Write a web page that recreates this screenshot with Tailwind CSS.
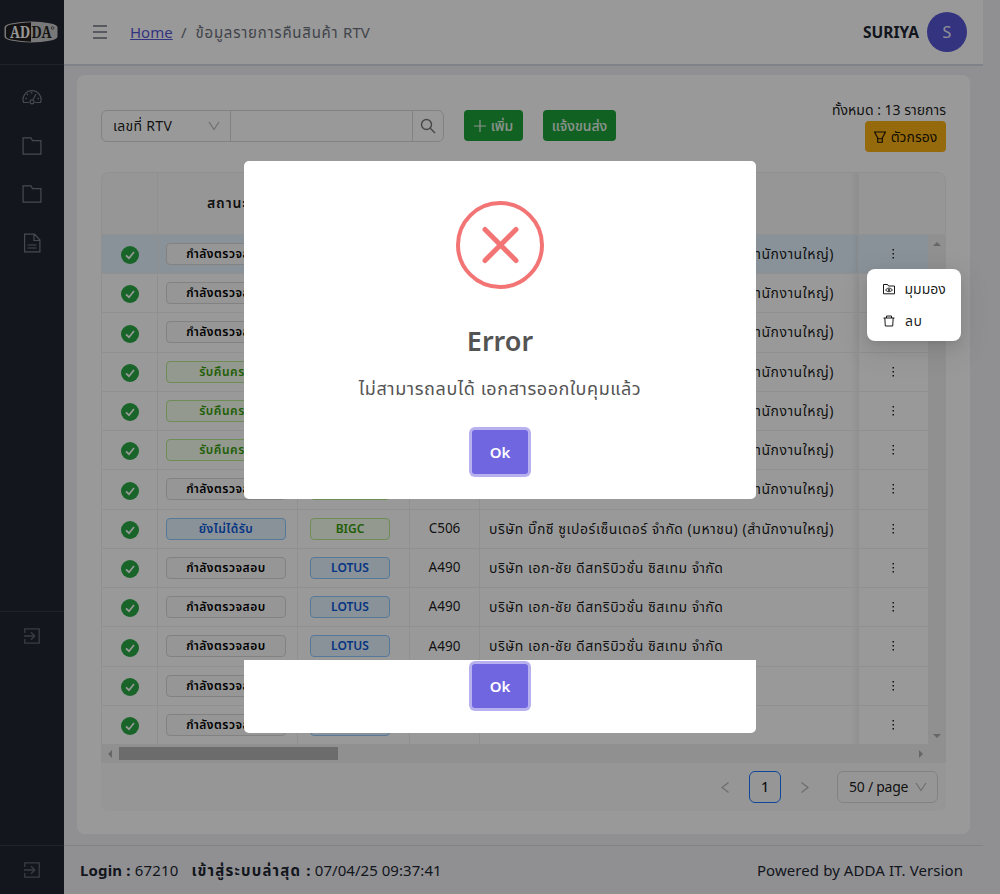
<!DOCTYPE html>
<html lang="th">
<head>
<meta charset="utf-8">
<title>ADDA RTV</title>
<script src="https://cdn.jsdelivr.net/npm/@tailwindcss/browser@4"></script>
</head>
<body class="relative h-[894px] w-[1000px] overflow-hidden bg-[#f0f1f6] font-['Noto_Sans','Noto_Sans_Thai','Open_Sans',sans-serif] text-sm text-[#212631]">
<div class="flex h-[894px]">
  <aside class="flex w-16 shrink-0 flex-col bg-[#212631] text-[#8c9099]">
    <div class="flex h-[65px] items-center justify-center border-b border-[#363b47] pr-0.5">
      <svg width="54" height="22" viewBox="0 0 54 22"><path d="M7 2.5Q27 -1.500 47 2.500Q53.500 4 53.500 6.500V15.500Q53.500 18 47 19.500Q27 23.500 7 19.500Q.5 18 .5 15.500V6.500Q.5 4 7 2.500Z" fill="#c8c8c8"/><path d="M7.500 3.500Q17 1.500 27 1.300V20.700Q17 20.500 7.500 18.500Q2 17.500 2 15V7Q2 4.500 7.500 3.500Z" fill="#231f20"/><text x="6" y="16.500" font-family="Noto Serif,Liberation Serif" font-weight="700" font-size="16" textLength="20" lengthAdjust="spacingAndGlyphs" fill="#fff">AD</text><text x="27.500" y="16.500" font-family="Noto Serif,Liberation Serif" font-weight="700" font-size="16" textLength="20" lengthAdjust="spacingAndGlyphs" fill="#231f20">DA</text><circle cx="48.500" cy="7" r="1.300" fill="none" stroke="#333" stroke-width=".7"/></svg>
    </div>
    <nav class="flex h-[546px] flex-col items-center gap-7 pt-[23px] opacity-80">
      <svg class="size-5" viewBox="0 0 20 20" fill="none" stroke="currentColor" stroke-width="1.200"><path d="M6.800 14.500H1.500A9 9 0 1 1 18.600 14.500H13.200M11 11.500L14 6"/><circle cx="10" cy="13.800" r="2"/><path d="M3.300 10.500h1.500M5 6l1 1M9.500 4v1.500M15.500 10.500H17" stroke-width="1.500"/></svg>
      <svg class="size-5 shrink-0" viewBox="0 0 20 20" fill="none" stroke="currentColor" stroke-width="1.200"><path d="M1.100 1.900H9L10.500 4.700H18.900V18.100H1.100Z"/></svg>
      <svg class="size-5 shrink-0" viewBox="0 0 20 20" fill="none" stroke="currentColor" stroke-width="1.200"><path d="M1.100 1.900H9L10.500 4.700H18.900V18.100H1.100Z"/></svg>
      <svg class="mt-px size-5 shrink-0" viewBox="0 0 20 20" fill="none" stroke="currentColor" stroke-width="1.200"><path d="M2.600 1.100H12.500L17.900 7V18.900H2.600ZM12 1.100V7.500H17.900M5.500 12H14.500M5.500 15H14.500"/></svg>
    </nav>
    <div class="flex h-[234px] flex-col items-center border-t border-[#363b47] pt-4">
      <svg class="size-4 opacity-60" viewBox="0 0 16 16" fill="none" stroke="currentColor" stroke-width="1.300"><path d="M.8 5V.8H15.200V15.200H.8V11M0 8H10.500M7 4.200L10.800 8L7 11.800"/></svg>
    </div>
    <div class="flex flex-1 flex-col items-center border-t border-[#363b47] pt-4">
      <svg class="size-4 opacity-60" viewBox="0 0 16 16" fill="none" stroke="currentColor" stroke-width="1.300"><path d="M.8 5V.8H15.200V15.200H.8V11M0 8H10.500M7 4.200L10.800 8L7 11.800"/></svg>
    </div>
  </aside>

  <div class="flex w-[919px] flex-col">
    <header class="flex h-[66px] shrink-0 items-center border-b-2 border-[#d5d9e4] bg-white pr-4 pl-[29px] text-[15px]">
      <svg class="h-4 w-[14px]" viewBox="0 0 14 16" stroke="#6b7280" stroke-width="1.300"><path d="M0 2H14M0 8H14M0 14H14"/></svg>
      <div class="mt-0.5 ml-[23px] flex items-center gap-2 whitespace-nowrap text-[#6d727c]">
        <a class="w-[43px] text-[#5856d6] underline">Home</a><span>/</span><span class="ml-px tracking-[0.75px]">ข้อมูลรายการคืนสินค้า <span class="tracking-normal">RTV</span></span>
      </div>
      <b class="ml-auto text-[15.5px]">SURIYA</b>
      <div class="ml-2 flex size-10 items-center justify-center rounded-full bg-[#5856d6] text-base text-white/90">S</div>
    </header>

    <main class="mt-[9px] ml-[13px] h-[759px] w-[893px] rounded-lg bg-white px-6 pt-[26px] text-black/90">
      <div class="flex h-[71px] w-[845px] items-start">
        <div class="mt-[9px] flex h-8 w-[343px] rounded-md border border-[#d9d9d9]">
          <div class="flex w-[129px] items-center justify-between border-r border-[#d9d9d9] pr-[10px] pl-[11px] tracking-[0.3px] whitespace-nowrap">เลขที่ RTV
            <svg class="size-3" viewBox="0 0 12 12" fill="none" stroke="#b8b8b8" stroke-width="1.200"><path d="M1 2L6 9.500L11 2"/></svg></div>
          <div class="flex-1"></div>
          <div class="flex w-[31px] items-center justify-center border-l border-[#d9d9d9]">
            <svg class="size-4" viewBox="0 0 16 16" fill="none" stroke="#777" stroke-width="1.400"><circle cx="6.500" cy="6.500" r="5"/><path d="M10.300 10.300L15 15"/></svg></div>
        </div>
        <div class="mt-[9px] ml-5 flex h-[31px] w-[59px] items-center justify-center gap-[5px] rounded bg-[#1da23a] text-[14px] font-medium whitespace-nowrap text-white/90">
          <svg class="size-3" viewBox="0 0 12 12" stroke="currentColor" stroke-width="1.200"><path d="M0 6H12M6 0V12"/></svg>เพิ่ม</div>
        <div class="mt-[9px] ml-5 flex h-[31px] w-[73px] items-center justify-center rounded bg-[#1da23a] text-[14px] font-medium whitespace-nowrap text-white/90">แจ้งขนส่ง</div>
        <div class="ml-auto flex flex-col items-end">
          <div class="-mt-px h-[21px] whitespace-nowrap">ทั้งหมด : 13 รายการ</div>
          <div class="flex h-[31px] w-[81px] items-center justify-center gap-[5px] rounded bg-[#f9b115] whitespace-nowrap">
            <svg class="size-3" viewBox="0 0 12 12" fill="none" stroke="currentColor" stroke-width="1.100"><path d="M.5 1H11.500L8.300 7V11.300H3.700V7ZM3.700 7.800H8.300"/></svg>ตัวกรอง</div>
        </div>
      </div>

      <div class="w-[845px] overflow-hidden rounded-lg bg-[#fafafa]">
        <div class="flex h-[62.75px] rounded-t-lg border border-[#f0f0f0] bg-[#fafafa] font-semibold">
          <div class="w-14 border-r border-[#f0f0f0]"></div>
          <div class="flex w-[140px] items-center justify-center border-r border-[#f0f0f0] tracking-[0.9px]">สถานะ</div>
          <div class="w-28 border-r border-[#f0f0f0]"></div><div class="w-[70px] border-r border-[#f0f0f0]"></div>
          <div class="w-[371px]"></div>
          <div class="w-2 border-r border-[#f0f0f0] bg-linear-to-r from-transparent to-black/5"></div>
        </div>
        <div class="flex">
          <div id="rows" class="w-[827px] bg-white"></div>
          <div class="flex w-[18px] flex-col items-center justify-between bg-[#f0f0f0] py-1.5">
            <svg width="8" height="6"><path d="M0 5L4 1L8 5Z" fill="#aaa"/></svg>
            <svg width="8" height="6"><path d="M0 1L4 5L8 1Z" fill="#aaa"/></svg>
          </div>
        </div>
        <div class="flex h-[17.6px] items-center bg-[#f0f0f0] pl-1.5">
          <svg width="6" height="8"><path d="M5 0L1 4L5 8Z" fill="#aaa"/></svg>
          <div class="ml-1.5 h-[13px] w-[219px] bg-[#b5b5b5]"></div>
          <svg class="mr-[22px] ml-auto" width="6" height="8"><path d="M1 0L5 4L1 8Z" fill="#aaa"/></svg>
        </div>
        <div class="flex h-12 items-center justify-end pr-2 whitespace-nowrap">
          <svg class="size-3" viewBox="0 0 12 12" fill="none" stroke="#b5b5b5" stroke-width="1.200"><path d="M9.500 1.500L3 6.500L9.500 11.500"/></svg>
          <div class="ml-[18px] flex size-8 items-center justify-center rounded-md border border-[#1677ff] font-medium">1</div>
          <svg class="ml-[18px] size-3" viewBox="0 0 12 12" fill="none" stroke="#b5b5b5" stroke-width="1.200"><path d="M2.500 1.500L9 6.500L2.500 11.500"/></svg>
          <div class="ml-[26px] flex h-8 w-[101px] items-center justify-between rounded-md border border-[#d9d9d9] pr-[10px] pl-[11px]"><span class="tracking-[-0.25px]">50 / page</span>
            <svg class="size-3" viewBox="0 0 12 12" fill="none" stroke="#b8b8b8" stroke-width="1.200"><path d="M1 2L6 9.500L11 2"/></svg></div>
        </div>
      </div>
    </main>

    <footer class="mt-[11px] flex flex-1 items-center justify-between border-t border-[#d8dbe3] pt-px pr-5 pl-4 text-[15px] whitespace-nowrap">
      <div class="flex gap-1"><b class="tracking-[0.15px]">Login :</b><span class="tracking-[0.2px]">67210</span><b class="ml-[9px] tracking-[1.2px]">เข้าสู่ระบบล่าสุด :</b><span class="-ml-px tracking-[0.05px]">07/04/25 09:37:41</span></div>
      <div class="tracking-[0.08px]">Powered by ADDA IT. Version</div>
    </footer>
  </div>
</div>

<div class="absolute inset-0 bg-black/40"></div>

<div class="absolute top-[269px] left-[867px] flex h-[72px] w-[94px] flex-col rounded-lg bg-white p-1 text-black/90 shadow-[0_6px_16px_0_rgba(0,0,0,0.08),0_3px_6px_-4px_rgba(0,0,0,0.12),0_9px_28px_8px_rgba(0,0,0,0.05)]">
  <div class="flex h-8 items-center gap-[9.5px] pl-3"><svg class="size-3" viewBox="0 0 12 12" fill="none" stroke="currentColor"><path d="M.5 1.500H4.500L5.500 3H11.500V10.800H.5Z"/><path d="M2.500 7Q6 3 9.500 7Q6 10.500 2.500 7Z" stroke-width=".9"/><circle cx="6" cy="6.900" r=".8"/></svg><span>มุมมอง</span></div>
  <div class="flex h-8 items-center gap-[10px] pl-3"><svg class="size-3" viewBox="0 0 12 12" fill="none" stroke="currentColor"><path d="M.5 3H11.500M3.500 3V1H8.500V3M1.800 3L2.300 11H9.700L10.200 3"/></svg><span class="tracking-[0.5px]">ลบ</span></div>
</div>

<div class="absolute top-[161px] left-[244px] flex h-[338px] w-[512px] flex-col items-center rounded-[5px] bg-white text-[#545454]">
  <svg class="mt-10 size-[88px] shrink-0" viewBox="0 0 88 88" fill="none" stroke="#f27474"><circle cx="44" cy="44" r="42" stroke-width="4"/><path d="M29 28.500L60 59.500M60 28.500L29 59.500" stroke-width="5" stroke-linecap="round"/></svg>
  <h2 class="mt-[30px] h-11 text-[27px] leading-[44px] font-semibold">Error</h2>
  <p class="mt-[9px] h-8 text-[18px] leading-8 tracking-[0.58px] whitespace-nowrap">ไม่สามารถลบได้ เอกสารออกใบคุมแล้ว</p>
  <button class="mt-[26px] h-11 w-14 rounded-[3px] bg-[#7066e0] pt-px text-[15px] font-semibold text-white shadow-[0_0_0_3px_#b7b2ef]">Ok</button>
</div>
<div class="absolute top-[660px] left-[244px] flex h-[73px] w-[512px] flex-col items-center rounded-b-[5px] bg-white">
  <button class="mt-1 h-11 w-14 rounded-[3px] bg-[#7066e0] pt-px text-[15px] font-semibold text-white shadow-[0_0_0_3px_#b7b2ef]">Ok</button>
</div>

<script>
const gray = 'border-[#d9d9d9] bg-[#fafafa] text-black', green = 'border-[#b7eb8f] bg-[#f6ffed] text-[#389e0d]', blue = 'border-[#91caff] bg-[#e6f4ff] text-[#0958d9]';
const check = 'กำลังตรวจสอบ', full = 'รับคืนครบ', none = 'ยังไม่ได้รับ';
const bigc = ['BIGC', green, 'C506', 'บริษัท บิ๊กซี ซูเปอร์เซ็นเตอร์ จำกัด (มหาชน) (สำนักงานใหญ่)'];
const lotus = ['LOTUS', blue, 'A490', 'บริษัท เอก-ชัย ดีสทริบิวชั่น ซิสเทม จำกัด'];
const data = [[check, gray, bigc], [check, gray, bigc], [check, gray, bigc], [full, green, bigc], [full, green, bigc], [full, green, bigc], [check, gray, bigc], [none, blue, bigc], [check, gray, lotus], [check, gray, lotus], [check, gray, lotus], [check, gray, lotus], [check, gray, lotus]];
document.getElementById('rows').innerHTML = data.map(([status, tone, c], i) => `
<div class="flex h-[39.25px] border-b border-l border-[#f0f0f0] whitespace-nowrap ${i ? '' : 'bg-[#e6f4ff]'}">
  <div class="flex w-14 items-center justify-center border-r border-[#f0f0f0] pt-[2.5px]"><svg class="size-[18px]" viewBox="0 0 18 18"><circle cx="9" cy="9" r="9" fill="#28a745"/><path d="M5 9.300L8 12.200L13 6" fill="none" stroke="#fff" stroke-width="1.700"/></svg></div>
  <div class="flex w-[140px] items-center border-r border-[#f0f0f0] pl-2"><div class="flex h-[22px] w-[120px] items-center justify-center rounded border text-xs font-semibold tracking-[0.5px] ${tone}">${status}</div></div>
  <div class="flex w-28 items-center border-r border-[#f0f0f0] pl-3"><div class="flex h-[22px] w-20 items-center justify-center rounded border text-xs font-semibold ${c[1]}">${c[0]}</div></div>
  <div class="flex w-[70px] items-center justify-center border-r border-[#f0f0f0] text-[13.5px]">${c[2]}</div>
  <div class="flex w-[371px] items-center pl-[9px] tracking-[0.51px]">${c[3]}</div>
  <div class="w-2 border-r border-[#f0f0f0] bg-linear-to-r from-transparent to-black/5"></div>
  <div class="flex flex-1 items-center justify-center pr-px"><svg width="3" height="12" fill="#222"><path d="M.5 1h1.500v1.500h-1.500zM.5 5h1.500v1.500h-1.500zM.5 9h1.500v1.500h-1.500z"/></svg></div>
</div>`).join('');
</script>
</body>
</html>
